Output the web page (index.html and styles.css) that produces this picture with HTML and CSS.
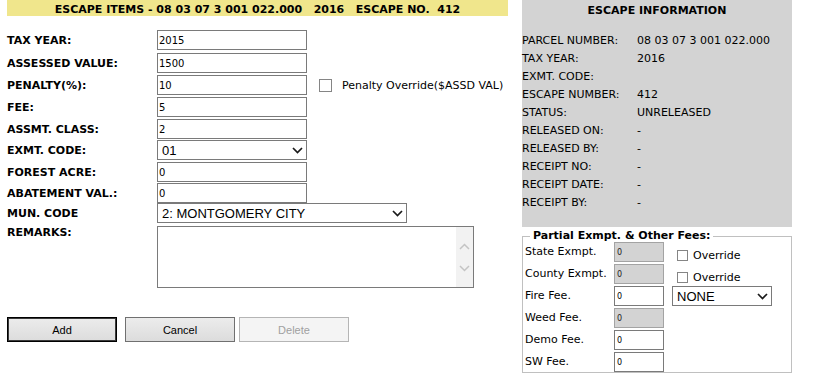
FILE: index.html
```html
<!DOCTYPE html>
<html>
<head>
<meta charset="utf-8">
<link rel="stylesheet" href="styles.css">
</head>
<body>
<div class="page">
  <div class="left">
    <div class="banner">ESCAPE ITEMS - 08 03 07 3 001 022.000   2016   ESCAPE NO.  412</div>
    <div class="form">
      <div class="lbl">TAX YEAR:</div>
      <div class="fld"><input class="txt" type="text" value="2015"></div>

      <div class="lbl">ASSESSED VALUE:</div>
      <div class="fld"><input class="txt" type="text" value="1500"></div>

      <div class="lbl">PENALTY(%):</div>
      <div class="fld penalty">
        <input class="txt" type="text" value="10">
        <input class="chk chk-lg" type="checkbox">
        <span class="chk-text">Penalty Override($ASSD VAL)</span>
      </div>

      <div class="lbl">FEE:</div>
      <div class="fld"><input class="txt" type="text" value="5"></div>

      <div class="lbl">ASSMT. CLASS:</div>
      <div class="fld"><input class="txt" type="text" value="2"></div>

      <div class="lbl">EXMT. CODE:</div>
      <div class="fld">
        <div class="selwrap w150">
          <select class="sel"><option>01</option></select>
          <svg class="caret" width="11" height="7" viewBox="0 0 11 7"><path d="M1 1 L5.5 5.5 L10 1" fill="none" stroke="#1a1a1a" stroke-width="1.7"/></svg>
        </div>
      </div>

      <div class="lbl">FOREST ACRE:</div>
      <div class="fld"><input class="txt" type="text" value="0"></div>

      <div class="lbl">ABATEMENT VAL.:</div>
      <div class="fld"><input class="txt" type="text" value="0"></div>

      <div class="lbl">MUN. CODE</div>
      <div class="fld">
        <div class="selwrap w250">
          <select class="sel"><option>2: MONTGOMERY CITY</option></select>
          <svg class="caret" width="11" height="7" viewBox="0 0 11 7"><path d="M1 1 L5.5 5.5 L10 1" fill="none" stroke="#1a1a1a" stroke-width="1.7"/></svg>
        </div>
      </div>

      <div class="lbl lbl-top">REMARKS:</div>
      <div class="fld">
        <div class="area">
          <textarea class="area-input"></textarea>
          <div class="sb">
            <svg width="11" height="7" viewBox="0 0 11 7"><path d="M1 6 L5.5 1.5 L10 6" fill="none" stroke="#c4c4c4" stroke-width="1.5"/></svg>
            <svg width="11" height="7" viewBox="0 0 11 7"><path d="M1 1 L5.5 5.5 L10 1" fill="none" stroke="#c4c4c4" stroke-width="1.5"/></svg>
          </div>
        </div>
      </div>
    </div>

    <div class="buttons">
      <button class="btn btn-default">Add</button>
      <button class="btn btn-cancel">Cancel</button>
      <button class="btn btn-disabled" disabled>Delete</button>
    </div>
  </div>

  <div class="right">
    <div class="info">
      <div class="info-title">ESCAPE INFORMATION</div>
      <div class="info-grid">
        <div>PARCEL NUMBER:</div><div>08 03 07 3 001 022.000</div>
        <div>TAX YEAR:</div><div>2016</div>
        <div>EXMT. CODE:</div><div></div>
        <div>ESCAPE NUMBER:</div><div>412</div>
        <div>STATUS:</div><div>UNRELEASED</div>
        <div>RELEASED ON:</div><div>-</div>
        <div>RELEASED BY:</div><div>-</div>
        <div>RECEIPT NO:</div><div>-</div>
        <div>RECEIPT DATE:</div><div>-</div>
        <div>RECEIPT BY:</div><div>-</div>
      </div>
    </div>

    <fieldset class="fees">
      <legend class="fees-legend">Partial Exmpt. &amp; Other Fees:</legend>
      <div class="fees-grid">
        <div class="flbl">State Exmpt.</div>
        <input class="ftxt" type="text" value="0" disabled>
        <label class="ovr"><input class="chk chk-sm" type="checkbox"><span>Override</span></label>

        <div class="flbl">County Exmpt.</div>
        <input class="ftxt" type="text" value="0" disabled>
        <label class="ovr"><input class="chk chk-sm" type="checkbox"><span>Override</span></label>

        <div class="flbl">Fire Fee.</div>
        <input class="ftxt" type="text" value="0">
        <div class="selwrap w100 fire-sel">
          <select class="sel"><option>NONE</option></select>
          <svg class="caret" width="11" height="7" viewBox="0 0 11 7"><path d="M1 1 L5.5 5.5 L10 1" fill="none" stroke="#1a1a1a" stroke-width="1.7"/></svg>
        </div>

        <div class="flbl">Weed Fee.</div>
        <input class="ftxt" type="text" value="0" disabled>
        <div></div>

        <div class="flbl">Demo Fee.</div>
        <input class="ftxt" type="text" value="0">
        <div></div>

        <div class="flbl">SW Fee.</div>
        <input class="ftxt" type="text" value="0">
        <div></div>
      </div>
    </fieldset>
  </div>
</div>
</body>
</html>
```

FILE: styles.css
```css
html, body {
  margin: 0;
  padding: 0;
  background: #ffffff;
}

body {
  font-family: "DejaVu Sans", Verdana, sans-serif;
  font-size: 11px;
  color: #000;
}

.page {
  display: flex;
  align-items: flex-start;
  gap: 14px;
  padding-left: 7px;
}

.left {
  width: 501px;
}

.banner {
  box-sizing: border-box;
  height: 16px;
  padding-top: 4px;
  background: #f0e68c;
  font-weight: bold;
  font-size: 11px;
  line-height: 12px;
  text-align: center;
  white-space: pre;
  overflow: hidden;
}

.form {
  display: grid;
  grid-template-columns: 150px 1fr;
  grid-template-rows: 23px 22px 22px 22px 21px 22px 21px 20px 23px 62px;
  margin-top: 14px;
}

.lbl {
  font-weight: bold;
  line-height: 22px;
  white-space: nowrap;
}

.lbl-top {
  line-height: 13px;
}

.fld {
  display: flex;
  align-items: flex-start;
}

.txt {
  box-sizing: border-box;
  width: 150px;
  height: 20px;
  margin: 0;
  padding: 0 1px;
  border: 1px solid #7a7a7a;
  border-radius: 0;
  background: #fff;
  font-family: "DejaVu Sans", Verdana, sans-serif;
  font-size: 10px;
  color: #000;
  outline: none;
}

.penalty {
  align-items: center;
  height: 20px;
}

.chk {
  -webkit-appearance: none;
  appearance: none;
  box-sizing: border-box;
  margin: 0;
  border: 1px solid #858585;
  border-radius: 0;
  background: #fff;
}

.chk-lg {
  width: 13px;
  height: 13px;
  margin-left: 12px;
}

.chk-text {
  margin-left: 10px;
  white-space: nowrap;
}

.selwrap {
  position: relative;
  height: 20px;
}

.w150 { width: 150px; }
.w250 { width: 250px; }
.w100 { width: 100px; }

.sel {
  -webkit-appearance: none;
  appearance: none;
  box-sizing: border-box;
  width: 100%;
  height: 20px;
  margin: 0;
  padding: 0 20px 0 4px;
  border: 1px solid #7a7a7a;
  border-radius: 0;
  background: #fff;
  font-family: "Liberation Sans", Arial, sans-serif;
  font-size: 13px;
  color: #000;
  outline: none;
}

.caret {
  position: absolute;
  right: 4px;
  top: 7px;
  pointer-events: none;
}

.area {
  box-sizing: border-box;
  display: flex;
  width: 317px;
  height: 62px;
  border: 1px solid #7a7a7a;
  background: #fff;
}

.area-input {
  flex: 1;
  margin: 0;
  padding: 2px;
  border: none;
  resize: none;
  outline: none;
  background: #fff;
  font-family: "DejaVu Sans", Verdana, sans-serif;
  font-size: 10px;
}

.sb {
  width: 17px;
  background: #f2f2f2;
  display: flex;
  flex-direction: column;
  align-items: center;
  justify-content: center;
  gap: 15px;
}

.sb svg {
  display: block;
}

.buttons {
  display: flex;
  margin-top: 29px;
}

.btn {
  box-sizing: border-box;
  width: 110px;
  height: 25px;
  margin: 0;
  padding: 0;
  border: 1px solid #707070;
  border-radius: 0;
  background: linear-gradient(#ececec, #dcdcdc);
  font-family: "Liberation Sans", Arial, sans-serif;
  font-size: 11px;
  color: #000;
}

.btn-default {
  border: 1px solid #000;
  box-shadow: inset 0 0 0 1px #3a3a3a;
}

.btn-cancel {
  margin-left: 8px;
}

.btn-disabled {
  margin-left: 4px;
  border-color: #b5b5b5;
  background: #f4f4f4;
  color: #a0a0a0;
}

.right {
  width: 270px;
}

.info {
  box-sizing: border-box;
  height: 227px;
  padding-top: 2px;
  background: #d3d3d3;
}

.info-title {
  font-weight: bold;
  line-height: 18px;
  text-align: center;
  margin-bottom: 12px;
}

.info-grid {
  display: grid;
  grid-template-columns: 115px 1fr;
  line-height: 18px;
  white-space: nowrap;
}

.fees {
  margin: 3px 0 0 0;
  padding: 0 1px 0 1px;
  border: 1px solid #c0c0c0;
  min-width: 0;
}

.fees-legend {
  margin-left: 6px;
  padding: 0 3px;
  font-weight: bold;
  line-height: 12px;
}

.fees-grid {
  display: grid;
  grid-template-columns: 89px 50px 1fr;
  grid-auto-rows: 20px;
  row-gap: 2px;
  padding-left: 1px;
}

.flbl {
  line-height: 20px;
  white-space: nowrap;
}

.ftxt {
  box-sizing: border-box;
  width: 50px;
  height: 20px;
  margin: 0;
  padding: 0 2px;
  border: 1px solid #7a7a7a;
  border-radius: 0;
  background: #fff;
  font-family: "DejaVu Sans", Verdana, sans-serif;
  font-size: 8px;
  color: #000;
  outline: none;
}

.ftxt:disabled {
  background: #d3d3d3;
  border-color: #a3a3a3;
  color: #222;
}

.ovr {
  display: flex;
  align-items: center;
  height: 13px;
  margin: 7px 0 0 13px;
  line-height: 13px;
  white-space: nowrap;
}

.chk-sm {
  width: 11px;
  height: 11px;
  margin-right: 5px;
}

.fire-sel {
  margin-left: 8px;
}
```
